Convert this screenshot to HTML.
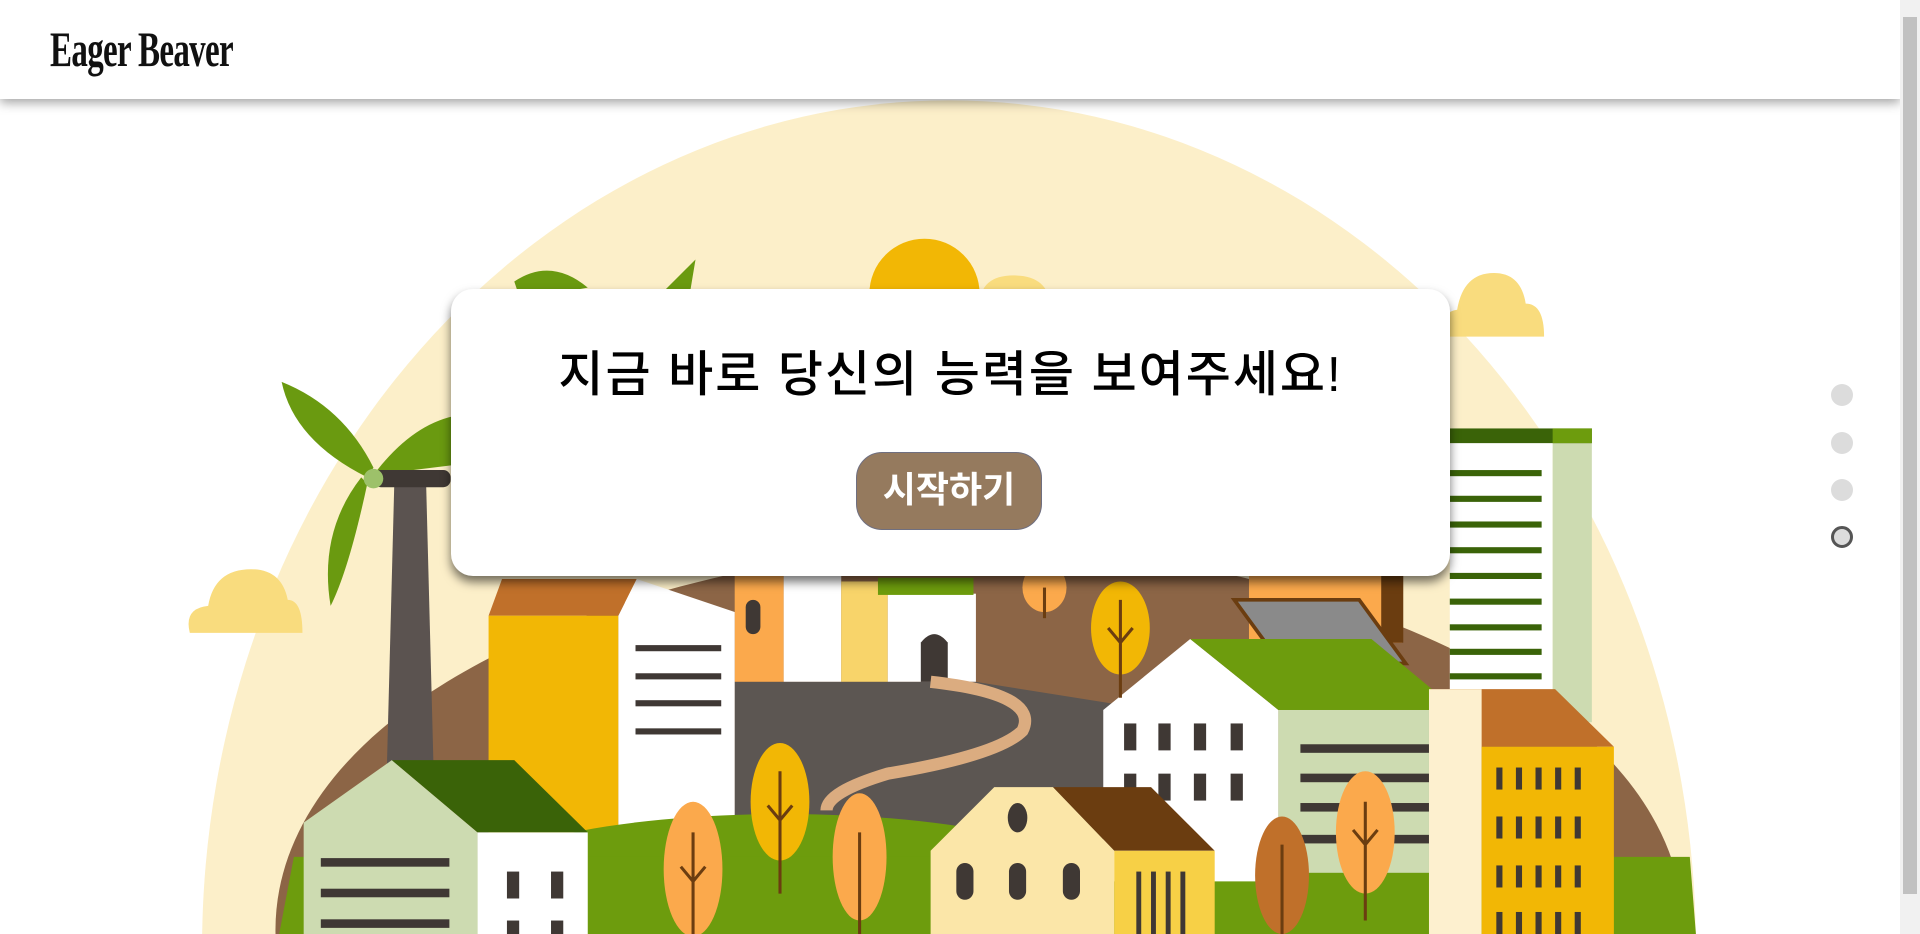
<!DOCTYPE html>
<html><head><meta charset="utf-8"><style>
html,body{margin:0;padding:0;width:1920px;height:934px;overflow:hidden;background:#fff;font-family:"Liberation Sans","Noto Sans CJK KR",sans-serif;position:relative;}
#ill{position:absolute;left:0;top:0;width:1920px;height:934px;display:block;}
header{position:absolute;left:0;top:0;width:1900px;height:99px;background:#fff;box-shadow:0 4px 10px rgba(0,0,0,.35);z-index:5;}
.logo{position:absolute;left:50px;top:20px;font-family:"Liberation Serif",serif;font-weight:bold;font-size:50px;color:#111;transform:scaleX(.66);transform-origin:left;letter-spacing:-1px;white-space:nowrap;}
.card{position:absolute;left:451px;top:289px;width:999px;height:287px;background:#fff;border-radius:22px;box-shadow:0 6px 10px rgba(0,0,0,.55);z-index:4;}
.title{position:absolute;left:0;right:0;top:46px;text-align:center;font-family:"Liberation Sans","Noto Sans CJK KR",sans-serif;font-weight:500;font-size:49px;letter-spacing:2px;color:#000;}
.btn{position:absolute;left:405px;top:163px;width:186px;height:78px;background:#957a5e;border-radius:26px;border:1px solid #6f6f80;box-sizing:border-box;color:#fff;font-size:36px;font-weight:bold;text-align:center;line-height:74px;font-family:"Liberation Sans","Noto Sans CJK KR",sans-serif;}
.dot{position:absolute;left:1831px;width:22px;height:22px;border-radius:50%;background:#dcdcdc;z-index:4;}
.scroll{position:absolute;left:1900px;top:0;width:20px;height:934px;background:#f1f1f1;z-index:6;}
.thumb{position:absolute;left:3px;top:17px;width:14px;height:877px;background:#c1c1c1;}
</style></head><body>
<svg id="ill" viewBox="0 0 1568 763" preserveAspectRatio="none" xmlns="http://www.w3.org/2000/svg">
<ellipse cx="775" cy="775" rx="610" ry="693" fill="#fcefc9"/>
<path d="M225 763 C222 610, 420 468, 800 440 C1180 468, 1378 610, 1375 763 Z" fill="#8c6546"/>
<circle cx="755" cy="240" r="45" fill="#f2b705"/>
<path d="M800 250 q0-25 28-25 q28 0 30 25z" fill="#f9dc7e"/>
<path d="M155 517 q-5-20 15-22 q5-30 35-30 q25 0 30 25 q12 0 12 27z" fill="#f9dc7e"/>
<path d="M1180 275 q-5-20 10-22 q5-30 30-30 q22 0 26 25 q15 0 15 27z" fill="#f9dc7e"/>
<path d="M420 230 q30-20 60 5 l-55 10z M540 240 l28-28 l-5 30z" fill="#6a9a10"/>
<polygon points="322,395 348,395 354,625 316,625" fill="#5b5350"/>
<path d="M300 390 q-60-30 -70-78 q50 20 75 70z" fill="#6a9a10"/>
<path d="M300 395 q-15 70 -30 100 q-10-60 25-105z" fill="#6a9a10"/>
<path d="M305 388 q30-40 65-48 l0 40z" fill="#6a9a10"/>
<rect x="305" y="384" width="63" height="14" rx="6" fill="#3f3834"/>
<circle cx="305" cy="391" r="8" fill="#9dc16a"/>
<rect x="1020" y="465" width="125" height="60" fill="#fba94c"/>
<rect x="1128" y="470" width="18" height="55" fill="#6b3d10"/>
<path d="M1040 490v30M1060 490v30M1080 490v30M1100 490v30" stroke="#6b3d10" stroke-width="4"/>
<rect x="600" y="465" width="40" height="92" fill="#fba94c"/>
<rect x="609" y="490" width="12" height="28" rx="6" fill="#3f3834"/>
<rect x="640" y="465" width="47" height="92" fill="#fff"/>
<rect x="687" y="475" width="38" height="82" fill="#f8d46a"/>
<rect x="725" y="485" width="72" height="72" fill="#fff"/>
<rect x="717" y="472" width="78" height="14" fill="#6d9c0d"/>
<path d="M752 557v-32q11-14 22 0v32z" fill="#3f3834"/>
<polygon points="600,557 797,557 910,575 910,690 600,690" fill="#5c5652"/>
<path d="M760 557 q90 10 75 40 q-20 20 -110 35 q-50 15 -50 30" stroke="#dbac80" stroke-width="10" fill="none"/>
<rect x="1184" y="350" width="84" height="240" fill="#fff"/>
<rect x="1268" y="350" width="32" height="240" fill="#cddbb1"/>
<rect x="1184" y="350" width="116" height="12" fill="#3a6308"/><rect x="1268" y="350" width="32" height="12" fill="#6d9c0d"/>
<g fill="#3a6308"><rect x="1184" y="384" width="75" height="5"/><rect x="1184" y="405" width="75" height="5"/><rect x="1184" y="426" width="75" height="5"/><rect x="1184" y="447" width="75" height="5"/><rect x="1184" y="468" width="75" height="5"/><rect x="1184" y="489" width="75" height="5"/><rect x="1184" y="510" width="75" height="5"/><rect x="1184" y="530" width="75" height="5"/><rect x="1184" y="550" width="75" height="5"/></g>
<polygon points="1008,490 1110,490 1148,542 1046,542" fill="#8a8a8a" stroke="#6b3d10" stroke-width="3"/>
<path d="M1045 545v20M1115 545v20" stroke="#6b3d10" stroke-width="3"/>
<polygon points="410,473 520,473 505,503 399,503" fill="#c0702a"/>
<rect x="399" y="503" width="106" height="180" fill="#f2b705"/>
<polygon points="520,473 600,500 600,680 505,680 505,503" fill="#fff"/>
<g fill="#3f3834"><rect x="519" y="527" width="70" height="5"/><rect x="519" y="550" width="70" height="5"/><rect x="519" y="572" width="70" height="5"/><rect x="519" y="595" width="70" height="5"/></g>
<ellipse cx="640" cy="725" rx="260" ry="60" fill="#6d9c0d"/>
<path d="M228 763 L240 700 L1380 700 L1385 763z" fill="#6d9c0d"/>
<polygon points="248,672 320,621 390,680 390,763 248,763" fill="#cddbb1"/>
<polygon points="320,621 420,621 480,680 390,680" fill="#3a6308"/>
<rect x="390" y="680" width="90" height="83" fill="#fff"/>
<g fill="#3f3834"><rect x="262" y="701" width="105" height="7"/><rect x="262" y="726" width="105" height="7"/><rect x="262" y="751" width="105" height="7"/><rect x="414" y="712" width="10" height="22"/><rect x="450" y="712" width="10" height="22"/><rect x="414" y="752" width="10" height="15"/><rect x="450" y="752" width="10" height="15"/></g>
<polygon points="901,580 972,522 1044,580 1044,720 901,720" fill="#fff"/>
<polygon points="972,522 1120,522 1190,580 1044,580" fill="#6d9c0d"/>
<rect x="1044" y="580" width="123" height="133" fill="#cddbb1"/>
<g fill="#3f3834"><rect x="918" y="591" width="10" height="22"/><rect x="946" y="591" width="10" height="22"/><rect x="975" y="591" width="10" height="22"/><rect x="1005" y="591" width="10" height="22"/><rect x="918" y="632" width="10" height="22"/><rect x="946" y="632" width="10" height="22"/><rect x="975" y="632" width="10" height="22"/><rect x="1005" y="632" width="10" height="22"/><rect x="1062" y="608" width="105" height="7"/><rect x="1062" y="632" width="105" height="7"/><rect x="1062" y="656" width="105" height="7"/><rect x="1062" y="682" width="105" height="7"/></g>
<polygon points="1167,563 1270,563 1318,610 1210,610" fill="#c0702a"/>
<rect x="1167" y="563" width="43" height="200" fill="#fdf0cf"/>
<rect x="1210" y="610" width="108" height="153" fill="#f2b705"/>
<g fill="#3f3834"><rect x="1222" y="627" width="5" height="18"/><rect x="1238" y="627" width="5" height="18"/><rect x="1254" y="627" width="5" height="18"/><rect x="1270" y="627" width="5" height="18"/><rect x="1286" y="627" width="5" height="18"/><rect x="1222" y="667" width="5" height="18"/><rect x="1238" y="667" width="5" height="18"/><rect x="1254" y="667" width="5" height="18"/><rect x="1270" y="667" width="5" height="18"/><rect x="1286" y="667" width="5" height="18"/><rect x="1222" y="707" width="5" height="18"/><rect x="1238" y="707" width="5" height="18"/><rect x="1254" y="707" width="5" height="18"/><rect x="1270" y="707" width="5" height="18"/><rect x="1286" y="707" width="5" height="18"/><rect x="1222" y="745" width="5" height="18"/><rect x="1238" y="745" width="5" height="18"/><rect x="1254" y="745" width="5" height="18"/><rect x="1270" y="745" width="5" height="18"/><rect x="1286" y="745" width="5" height="18"/></g>
<polygon points="760,695 812,643 860,643 910,695 910,763 760,763" fill="#fbe6a8"/>
<polygon points="860,643 940,643 992,695 910,695" fill="#6b3d10"/>
<rect x="910" y="695" width="82" height="68" fill="#f7d046"/>
<g fill="#3f3834"><ellipse cx="831" cy="668" rx="8" ry="12"/><rect x="781" y="705" width="14" height="30" rx="7"/><rect x="824" y="705" width="14" height="30" rx="7"/><rect x="868" y="705" width="14" height="30" rx="7"/><rect x="928" y="712" width="4" height="51"/><rect x="940" y="712" width="4" height="51"/><rect x="952" y="712" width="4" height="51"/><rect x="964" y="712" width="4" height="51"/></g>
<g stroke="#6b3d10" stroke-width="2.5">
<ellipse cx="566" cy="710" rx="24" ry="55" fill="#fba94c" stroke="none"/><path d="M566 680v83M566 720l-10-12M566 720l10-12"/>
<ellipse cx="637" cy="655" rx="24" ry="48" fill="#f2b705" stroke="none"/><path d="M637 630v100M637 670l-10-12M637 670l10-12"/>
<ellipse cx="702" cy="700" rx="22" ry="52" fill="#fba94c" stroke="none"/><path d="M702 680v83"/>
<ellipse cx="915" cy="513" rx="24" ry="38" fill="#f2b705" stroke="none"/><path d="M915 490v80M915 525l-10-12M915 525l10-12"/>
<ellipse cx="853" cy="480" rx="18" ry="20" fill="#fba94c" stroke="none"/><path d="M853 480v25"/>
<ellipse cx="1047" cy="715" rx="22" ry="48" fill="#c0702a" stroke="none"/><path d="M1047 690v73"/>
<ellipse cx="1115" cy="680" rx="24" ry="50" fill="#fba94c" stroke="none"/><path d="M1115 655v97M1115 690l-10-12M1115 690l10-12"/>
</g>
</svg>
<header><div class="logo">Eager Beaver</div></header>
<div class="card"><div class="title">지금 바로 당신의 능력을 보여주세요!</div><div class="btn">시작하기</div></div>
<div class="dot" style="top:384px"></div>
<div class="dot" style="top:432px"></div>
<div class="dot" style="top:479px"></div>
<div class="dot" style="top:526px;border:3px solid #555;box-sizing:border-box"></div>
<div class="scroll"><div class="thumb"></div></div>
</body></html>
